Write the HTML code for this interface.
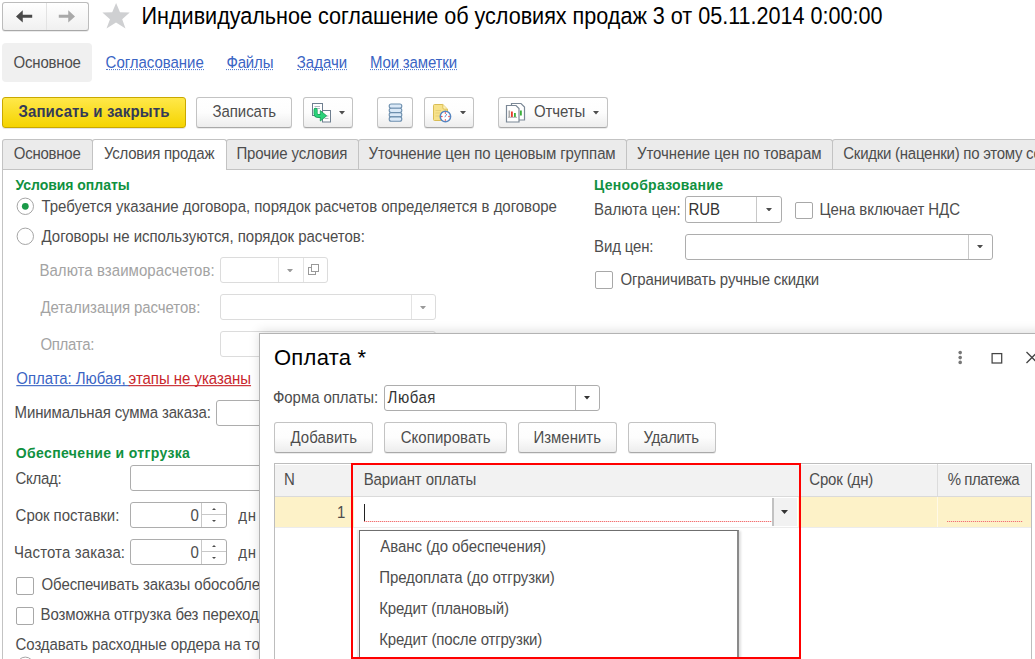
<!DOCTYPE html>
<html><head><meta charset="utf-8"><style>
html,body{margin:0;padding:0;}
body{width:1035px;height:659px;overflow:hidden;position:relative;background:#fff;font-family:"Liberation Sans", sans-serif;}
.t{position:absolute;white-space:nowrap;line-height:1;}
.b{position:absolute;}
</style></head><body>
<div class="b" style="left:2px;top:2px;width:87px;height:29px;box-sizing:border-box;border:1px solid #bcbcbc;border-bottom-color:#a8a8a8;border-radius:3px;background:linear-gradient(#ffffff,#f0f0f0);box-shadow:0 1px 0 rgba(0,0,0,0.08);"></div>
<div class="b" style="left:45.5px;top:3px;width:1.5px;height:27px;background:#e3e3e3;"></div>
<svg class="b" style="left:14px;top:8px" width="22" height="18" viewBox="0 0 22 18"><path d="M2 8.4 L8.75 2.2 L8.75 6.7 L18.2 6.7 L18.2 9.75 L8.75 9.75 L8.75 14.6 Z" fill="#4a4a4a"/></svg>
<svg class="b" style="left:57px;top:8px" width="22" height="18" viewBox="0 0 22 18"><path d="M18 8.4 L11.25 2.2 L11.25 6.7 L1.8 6.7 L1.8 9.75 L11.25 9.75 L11.25 14.6 Z" fill="#a9a9a9"/></svg>
<svg class="b" style="left:100px;top:0px" width="32" height="34" viewBox="0 0 32 34"><polygon points="16.1,3.1 20,12.2 29.7,12.4 22.2,19.2 25.5,28.6 16,22.4 6.5,28.6 10,19.2 2.4,12.4 12.2,12.2" fill="#cfd0d2"/></svg>
<div class="t" style="left:141.60px;top:6.0px;font-size:21.6px;color:#000;letter-spacing:-0.015px;transform:scaleY(1.1);transform-origin:0 18px;">Индивидуальное соглашение об условиях продаж 3 от 05.11.2014 0:00:00</div>
<div class="b" style="left:2px;top:43px;width:90px;height:39px;background:#f0f0f0;border-radius:4px;"></div>
<div class="t" style="left:13.50px;top:55.0px;font-size:15px;color:#4d4d4d;letter-spacing:-0.186px;transform:scaleY(1.1);transform-origin:0 13px;">Основное</div>
<div class="t" style="left:105.60px;top:56.0px;font-size:15px;color:#3a64c4;letter-spacing:-0.036px;transform:scaleY(1.1);transform-origin:0 13px;border-bottom:1px dotted #5a7fd0;line-height:13px;">Согласование</div>
<div class="t" style="left:226.40px;top:56.0px;font-size:15px;color:#3a64c4;letter-spacing:-0.15px;transform:scaleY(1.1);transform-origin:0 13px;border-bottom:1px dotted #5a7fd0;line-height:13px;">Файлы</div>
<div class="t" style="left:296.80px;top:56.0px;font-size:15px;color:#3a64c4;letter-spacing:-0.02px;transform:scaleY(1.1);transform-origin:0 13px;border-bottom:1px dotted #5a7fd0;line-height:13px;">Задачи</div>
<div class="t" style="left:370.00px;top:56.0px;font-size:15px;color:#3a64c4;letter-spacing:-0.17px;transform:scaleY(1.1);transform-origin:0 13px;border-bottom:1px dotted #5a7fd0;line-height:13px;">Мои заметки</div>
<div class="b" style="left:2px;top:97px;width:184px;height:31px;box-sizing:border-box;border:1px solid #c9a800;border-radius:3px;background:linear-gradient(#ffe84a,#f5d400);box-shadow:0 1px 0 rgba(0,0,0,0.10);"></div>
<div class="t" style="left:18.40px;top:104.0px;font-size:15px;color:#333a58;font-weight:700;letter-spacing:0.141px;transform:scaleY(1.1);transform-origin:0 13px;">Записать и закрыть</div>
<div class="b" style="left:196px;top:97px;width:96px;height:31px;box-sizing:border-box;border:1px solid #c3c3c3;border-bottom-color:#a9a9a9;border-radius:3px;background:linear-gradient(#ffffff 0%,#fdfdfd 50%,#ededed 100%);box-shadow:0 1px 0 rgba(0,0,0,0.08);"></div>
<div class="t" style="left:212.60px;top:104.0px;font-size:15px;color:#4d4d4d;letter-spacing:-0.086px;transform:scaleY(1.1);transform-origin:0 13px;">Записать</div>
<div class="b" style="left:303px;top:97px;width:50px;height:31px;box-sizing:border-box;border:1px solid #c3c3c3;border-bottom-color:#a9a9a9;border-radius:3px;background:linear-gradient(#ffffff 0%,#fdfdfd 50%,#ededed 100%);box-shadow:0 1px 0 rgba(0,0,0,0.08);"></div>
<svg class="b" style="left:310px;top:101px" width="24" height="24" viewBox="0 0 24 24">
<rect x="2.5" y="2.5" width="10" height="12" fill="#fff" stroke="#6f7f90" stroke-width="1"/>
<line x1="4.5" y1="5.5" x2="10" y2="5.5" stroke="#9aa6b2" stroke-width="0.8"/>
<line x1="7" y1="7.5" x2="10" y2="7.5" stroke="#9aa6b2" stroke-width="0.8"/>
<rect x="12.5" y="9.5" width="8" height="11.5" fill="#fff" stroke="#6f7f90" stroke-width="1"/>
<line x1="14.5" y1="15" x2="18.5" y2="15" stroke="#9aa6b2" stroke-width="0.8"/>
<line x1="14.5" y1="17.5" x2="18.5" y2="17.5" stroke="#9aa6b2" stroke-width="0.8"/>
<path d="M5.6 8.8 L5.6 12.5 Q5.6 15 9 15 L11 15" fill="none" stroke="#159a55" stroke-width="4" stroke-linecap="round"/>
<path d="M10.3 9.6 L16.6 14.8 L10.3 20 Z" fill="#2bd37a" stroke="#159a55" stroke-width="0.8" stroke-linejoin="round"/>
<path d="M5.6 8.8 L5.6 12.5 Q5.6 15 9 15 L11.5 15" fill="none" stroke="#2bd37a" stroke-width="2.6" stroke-linecap="round"/>
</svg>
<svg class="b" style="left:339.2px;top:111.25px" width="6" height="3.5" viewBox="0 0 6 3.5"><path d="M0 0 L6 0 L3.0 3.5 Z" fill="#4d4d4d"/></svg>
<div class="b" style="left:377px;top:97px;width:36px;height:31px;box-sizing:border-box;border:1px solid #c3c3c3;border-bottom-color:#a9a9a9;border-radius:3px;background:linear-gradient(#ffffff 0%,#fdfdfd 50%,#ededed 100%);box-shadow:0 1px 0 rgba(0,0,0,0.08);"></div>
<svg class="b" style="left:388px;top:103px" width="16" height="20" viewBox="0 0 16 20">
<rect x="1.2" y="1" width="12.6" height="4.3" rx="2" fill="#dbe9f7" stroke="#6d8fae" stroke-width="1.1"/>
<rect x="1.2" y="5.3" width="12.6" height="4.3" rx="2" fill="#dbe9f7" stroke="#6d8fae" stroke-width="1.1"/>
<rect x="1.2" y="9.6" width="12.6" height="4.3" rx="2" fill="#dbe9f7" stroke="#6d8fae" stroke-width="1.1"/>
<rect x="1.2" y="13.9" width="12.6" height="4.3" rx="2" fill="#dbe9f7" stroke="#6d8fae" stroke-width="1.1"/>
</svg>
<div class="b" style="left:424px;top:97px;width:50px;height:31px;box-sizing:border-box;border:1px solid #c3c3c3;border-bottom-color:#a9a9a9;border-radius:3px;background:linear-gradient(#ffffff 0%,#fdfdfd 50%,#ededed 100%);box-shadow:0 1px 0 rgba(0,0,0,0.08);"></div>
<svg class="b" style="left:431px;top:102px" width="24" height="24" viewBox="0 0 24 24">
<path d="M2.5 3.5 Q2.5 2.5 3.5 2.5 L11.8 2.5 L16.5 7.2 L16.5 17.5 Q16.5 18.5 15.5 18.5 L3.5 18.5 Q2.5 18.5 2.5 17.5 Z" fill="#f7e28a" stroke="#d9bd55" stroke-width="1"/>
<path d="M11.8 2.5 L11.8 5.8 Q11.8 7.2 13.2 7.2 L16.5 7.2" fill="#fdf0b8" stroke="#d9bd55" stroke-width="0.9"/>
<line x1="4.5" y1="8.5" x2="10" y2="8.5" stroke="#e0c870" stroke-width="0.7"/>
<line x1="4.5" y1="11" x2="9" y2="11" stroke="#e0c870" stroke-width="0.7"/>
<line x1="4.5" y1="14" x2="8" y2="14" stroke="#e0c870" stroke-width="0.7"/>
<circle cx="14.4" cy="14.5" r="5.2" fill="#fff" stroke="#5585c0" stroke-width="1.5"/>
<circle cx="14.4" cy="10.9" r="0.75" fill="#e8323a"/><circle cx="14.4" cy="18.1" r="0.75" fill="#e8323a"/>
<circle cx="10.8" cy="14.5" r="0.75" fill="#e8323a"/><circle cx="18" cy="14.5" r="0.75" fill="#e8323a"/>
<path d="M13.8 15.2 L15.8 12" stroke="#6a96d0" stroke-width="1"/>
</svg>
<svg class="b" style="left:459.6px;top:110.95px" width="6" height="3.5" viewBox="0 0 6 3.5"><path d="M0 0 L6 0 L3.0 3.5 Z" fill="#4d4d4d"/></svg>
<div class="b" style="left:498px;top:97px;width:110px;height:31px;box-sizing:border-box;border:1px solid #c3c3c3;border-bottom-color:#a9a9a9;border-radius:3px;background:linear-gradient(#ffffff 0%,#fdfdfd 50%,#ededed 100%);box-shadow:0 1px 0 rgba(0,0,0,0.08);"></div>
<svg class="b" style="left:504px;top:101px" width="24" height="24" viewBox="0 0 24 24">
<path d="M7.5 2.5 L17 2.5 L20.5 6 L20.5 19 L7.5 19 Z" fill="#fff" stroke="#7b8896" stroke-width="1.2"/>
<path d="M2.5 4.5 L12 4.5 L15 7.5 L15 21 L2.5 21 Z" fill="#fff" stroke="#7b8896" stroke-width="1.2"/>
<rect x="4.5" y="9.5" width="1.6" height="6.5" fill="#aaa"/>
<rect x="7" y="10.5" width="1.8" height="5.5" fill="#e8392c"/>
<rect x="10" y="12" width="1.8" height="4" fill="#3bb03b"/>
<rect x="16" y="9.5" width="1.8" height="5" fill="#3bb03b"/>
<line x1="4" y1="16.3" x2="13" y2="16.3" stroke="#999" stroke-width="0.8"/>
</svg>
<div class="t" style="left:534.00px;top:104.0px;font-size:15px;color:#4d4d4d;letter-spacing:-0.1px;transform:scaleY(1.1);transform-origin:0 13px;">Отчеты</div>
<svg class="b" style="left:593.0px;top:111.25px" width="6" height="3.5" viewBox="0 0 6 3.5"><path d="M0 0 L6 0 L3.0 3.5 Z" fill="#4d4d4d"/></svg>
<div class="b" style="left:2px;top:169px;width:1033px;height:1px;background:#c3c3c3;"></div>
<div class="b" style="left:2px;top:139px;width:91px;height:30px;box-sizing:border-box;border:1px solid #c3c3c3;border-bottom:none;border-radius:3px 3px 0 0;background:#ebebeb;"></div>
<div class="b" style="left:92px;top:139px;width:135px;height:31px;box-sizing:border-box;border:1px solid #c3c3c3;border-bottom:none;border-radius:3px 3px 0 0;background:#fff;"></div>
<div class="b" style="left:226px;top:139px;width:133px;height:30px;box-sizing:border-box;border:1px solid #c3c3c3;border-bottom:none;border-radius:3px 3px 0 0;background:#ebebeb;"></div>
<div class="b" style="left:358px;top:139px;width:269px;height:30px;box-sizing:border-box;border:1px solid #c3c3c3;border-bottom:none;border-radius:3px 3px 0 0;background:#ebebeb;"></div>
<div class="b" style="left:626px;top:139px;width:207px;height:30px;box-sizing:border-box;border:1px solid #c3c3c3;border-bottom:none;border-radius:3px 3px 0 0;background:#ebebeb;"></div>
<div class="b" style="left:832px;top:139px;width:208px;height:30px;box-sizing:border-box;border:1px solid #c3c3c3;border-bottom:none;border-radius:3px 3px 0 0;background:#ebebeb;"></div>
<div class="t" style="left:13.80px;top:146.0px;font-size:15px;color:#4d4d4d;letter-spacing:-0.257px;transform:scaleY(1.1);transform-origin:0 13px;">Основное</div>
<div class="t" style="left:103.90px;top:146.0px;font-size:15px;color:#4d4d4d;letter-spacing:-0.231px;transform:scaleY(1.1);transform-origin:0 13px;">Условия продаж</div>
<div class="t" style="left:236.40px;top:146.0px;font-size:15px;color:#4d4d4d;letter-spacing:-0.108px;transform:scaleY(1.1);transform-origin:0 13px;">Прочие условия</div>
<div class="t" style="left:368.50px;top:146.0px;font-size:15px;color:#4d4d4d;letter-spacing:-0.103px;transform:scaleY(1.1);transform-origin:0 13px;">Уточнение цен по ценовым группам</div>
<div class="t" style="left:637.00px;top:146.0px;font-size:15px;color:#4d4d4d;letter-spacing:-0.061px;transform:scaleY(1.1);transform-origin:0 13px;">Уточнение цен по товарам</div>
<div class="t" style="left:843.30px;top:146.0px;font-size:15px;color:#4d4d4d;letter-spacing:-0.26px;transform:scaleY(1.1);transform-origin:0 13px;">Скидки (наценки) по этому соглашению</div>
<div class="b" style="left:2px;top:169px;width:1px;height:490px;background:#c3c3c3;"></div>
<div class="t" style="left:15.50px;top:178.0px;font-size:14px;color:#10913f;font-weight:700;letter-spacing:-0.038px;">Условия оплаты</div>
<svg class="b" style="left:16px;top:197px" width="19" height="19" viewBox="0 0 19 19"><circle cx="9.3" cy="9.3" r="8.2" fill="#fff" stroke="#a6a6a6" stroke-width="1"/><circle cx="9.3" cy="9.3" r="3.4" fill="#1a9a48"/></svg>
<div class="t" style="left:41.50px;top:198.5px;font-size:15px;color:#4d4d4d;letter-spacing:-0.025px;transform:scaleY(1.1);transform-origin:0 13px;">Требуется указание договора, порядок расчетов определяется в договоре</div>
<svg class="b" style="left:16px;top:227px" width="19" height="19" viewBox="0 0 19 19"><circle cx="9.3" cy="9.3" r="8.2" fill="#fff" stroke="#a6a6a6" stroke-width="1"/></svg>
<div class="t" style="left:41.50px;top:228.6px;font-size:15px;color:#4d4d4d;letter-spacing:-0.019px;transform:scaleY(1.1);transform-origin:0 13px;">Договоры не используются, порядок расчетов:</div>
<div class="t" style="left:39.40px;top:263.3px;font-size:15px;color:#a3a3a3;letter-spacing:0.052px;transform:scaleY(1.1);transform-origin:0 13px;">Валюта взаиморасчетов:</div>
<div class="b" style="left:220px;top:257px;width:108px;height:26px;box-sizing:border-box;border:1px solid #dcdcdc;border-radius:3px;background:#fff;"></div>
<div class="b" style="left:278px;top:258px;width:1px;height:24px;background:#e3e3e3;"></div>
<div class="b" style="left:302.5px;top:258px;width:1.0px;height:24px;background:#e3e3e3;"></div>
<svg class="b" style="left:287.3px;top:268.75px" width="6" height="3.5" viewBox="0 0 6 3.5"><path d="M0 0 L6 0 L3.0 3.5 Z" fill="#9a9a9a"/></svg>
<svg class="b" style="left:307px;top:263px" width="14" height="14" viewBox="0 0 14 14"><rect x="1.5" y="4.5" width="7" height="7" fill="none" stroke="#999" stroke-width="1"/><rect x="4.5" y="1.5" width="7" height="7" fill="#fff" stroke="#999" stroke-width="1"/></svg>
<div class="t" style="left:40.40px;top:300.0px;font-size:15px;color:#a3a3a3;letter-spacing:-0.08px;transform:scaleY(1.1);transform-origin:0 13px;">Детализация расчетов:</div>
<div class="b" style="left:220px;top:294px;width:216px;height:26px;box-sizing:border-box;border:1px solid #dcdcdc;border-radius:3px;background:#fff;"></div>
<div class="b" style="left:410.5px;top:295px;width:1.0px;height:24px;background:#e3e3e3;"></div>
<svg class="b" style="left:419.6px;top:305.75px" width="6" height="3.5" viewBox="0 0 6 3.5"><path d="M0 0 L6 0 L3.0 3.5 Z" fill="#9a9a9a"/></svg>
<div class="t" style="left:40.40px;top:336.5px;font-size:15px;color:#a3a3a3;letter-spacing:-0.3px;transform:scaleY(1.1);transform-origin:0 13px;">Оплата:</div>
<div class="b" style="left:220px;top:331px;width:216px;height:26px;box-sizing:border-box;border:1px solid #dcdcdc;border-radius:3px;background:#fff;"></div>
<div class="t" style="left:16.30px;top:371.0px;font-size:15px;color:#3a64c4;letter-spacing:-0.05px;transform:scaleY(1.1);transform-origin:0 13px;text-decoration:underline;text-decoration-skip-ink:none;">Оплата: Любая,&nbsp;</div>
<div class="t" style="left:128.60px;top:371.0px;font-size:15px;color:#c8262c;letter-spacing:-0.04px;transform:scaleY(1.1);transform-origin:0 13px;text-decoration:underline;text-decoration-skip-ink:none;">этапы не указаны</div>
<div class="t" style="left:14.60px;top:405.0px;font-size:15px;color:#4d4d4d;letter-spacing:-0.129px;transform:scaleY(1.1);transform-origin:0 13px;">Минимальная сумма заказа:</div>
<div class="b" style="left:216px;top:400px;width:124px;height:26px;box-sizing:border-box;border:1px solid #adadad;border-radius:3px;background:#fff;"></div>
<div class="t" style="left:15.80px;top:446.4px;font-size:14px;color:#10913f;font-weight:700;letter-spacing:0.357px;">Обеспечение и отгрузка</div>
<div class="t" style="left:15.60px;top:471.0px;font-size:15px;color:#4d4d4d;letter-spacing:-0.32px;transform:scaleY(1.1);transform-origin:0 13px;">Склад:</div>
<div class="b" style="left:130px;top:465px;width:210px;height:26px;box-sizing:border-box;border:1px solid #adadad;border-radius:3px;background:#fff;"></div>
<div class="t" style="left:15.60px;top:508.0px;font-size:15px;color:#4d4d4d;letter-spacing:-0.046px;transform:scaleY(1.1);transform-origin:0 13px;">Срок поставки:</div>
<div class="b" style="left:130px;top:502px;width:97px;height:26px;box-sizing:border-box;border:1px solid #adadad;border-radius:3px;background:#fff;"></div>
<div class="b" style="left:201px;top:503px;width:1px;height:24px;background:#c8c8c8;"></div>
<div class="b" style="left:202px;top:514px;width:24px;height:1px;background:#c8c8c8;"></div>
<svg class="b" style="left:207px;top:505px" width="14" height="20" viewBox="0 0 14 20"><path d="M5 5 L9 5 L7 3 Z" fill="#4d4d4d"/><path d="M5 15 L9 15 L7 17 Z" fill="#4d4d4d"/></svg>
<div class="t" style="left:190.50px;top:508.0px;font-size:15px;color:#4d4d4d;transform:scaleY(1.1);transform-origin:0 13px;">0</div>
<div class="t" style="left:238.20px;top:508.0px;font-size:15px;color:#4d4d4d;letter-spacing:0.8px;transform:scaleY(1.1);transform-origin:0 13px;">дн</div>
<div class="t" style="left:14.00px;top:544.5px;font-size:15px;color:#4d4d4d;letter-spacing:0.114px;transform:scaleY(1.1);transform-origin:0 13px;">Частота заказа:</div>
<div class="b" style="left:130px;top:539px;width:97px;height:26px;box-sizing:border-box;border:1px solid #adadad;border-radius:3px;background:#fff;"></div>
<div class="b" style="left:201px;top:540px;width:1px;height:24px;background:#c8c8c8;"></div>
<div class="b" style="left:202px;top:551px;width:24px;height:1px;background:#c8c8c8;"></div>
<svg class="b" style="left:207px;top:542px" width="14" height="20" viewBox="0 0 14 20"><path d="M5 5 L9 5 L7 3 Z" fill="#4d4d4d"/><path d="M5 15 L9 15 L7 17 Z" fill="#4d4d4d"/></svg>
<div class="t" style="left:190.50px;top:544.5px;font-size:15px;color:#4d4d4d;transform:scaleY(1.1);transform-origin:0 13px;">0</div>
<div class="t" style="left:238.20px;top:544.5px;font-size:15px;color:#4d4d4d;letter-spacing:0.8px;transform:scaleY(1.1);transform-origin:0 13px;">дн</div>
<div class="b" style="left:16px;top:577px;width:18px;height:18px;box-sizing:border-box;border:1px solid #a8a8a8;border-radius:2px;background:#fff;"></div>
<div class="t" style="left:41.50px;top:577.0px;font-size:15px;color:#4d4d4d;letter-spacing:-0.1px;transform:scaleY(1.1);transform-origin:0 13px;">Обеспечивать заказы обособленно</div>
<div class="b" style="left:16px;top:607px;width:18px;height:18px;box-sizing:border-box;border:1px solid #a8a8a8;border-radius:2px;background:#fff;"></div>
<div class="t" style="left:40.50px;top:607.3px;font-size:15px;color:#4d4d4d;letter-spacing:-0.1px;transform:scaleY(1.1);transform-origin:0 13px;">Возможна отгрузка без переходов</div>
<div class="t" style="left:15.60px;top:637.4px;font-size:15px;color:#4d4d4d;letter-spacing:-0.1px;transform:scaleY(1.1);transform-origin:0 13px;">Создавать расходные ордера на товары</div>
<svg class="b" style="left:16px;top:656px" width="19" height="19" viewBox="0 0 19 19"><circle cx="9.3" cy="9.3" r="8.2" fill="#fff" stroke="#a6a6a6" stroke-width="1"/></svg>
<div class="t" style="left:594.10px;top:178.0px;font-size:14px;color:#10913f;font-weight:700;letter-spacing:0.271px;">Ценообразование</div>
<div class="t" style="left:594.10px;top:201.6px;font-size:15px;color:#4d4d4d;letter-spacing:0.02px;transform:scaleY(1.1);transform-origin:0 13px;">Валюта цен:</div>
<div class="b" style="left:685px;top:196px;width:97px;height:26.5px;box-sizing:border-box;border:1px solid #adadad;border-radius:3px;background:#fff;"></div>
<div class="b" style="left:756px;top:197px;width:1px;height:24.5px;background:#c8c8c8;"></div>
<svg class="b" style="left:765.6px;top:207.75px" width="6" height="3.5" viewBox="0 0 6 3.5"><path d="M0 0 L6 0 L3.0 3.5 Z" fill="#4d4d4d"/></svg>
<div class="t" style="left:688.50px;top:201.6px;font-size:15px;color:#333;letter-spacing:-0.1px;transform:scaleY(1.1);transform-origin:0 13px;">RUB</div>
<div class="b" style="left:795px;top:201.5px;width:18px;height:17.5px;box-sizing:border-box;border:1px solid #a8a8a8;border-radius:2px;background:#fff;"></div>
<div class="t" style="left:819.40px;top:202.0px;font-size:15px;color:#4d4d4d;letter-spacing:-0.05px;transform:scaleY(1.1);transform-origin:0 13px;">Цена включает НДС</div>
<div class="t" style="left:594.10px;top:239.0px;font-size:15px;color:#4d4d4d;letter-spacing:-0.157px;transform:scaleY(1.1);transform-origin:0 13px;">Вид цен:</div>
<div class="b" style="left:685px;top:233.5px;width:308px;height:26.0px;box-sizing:border-box;border:1px solid #adadad;border-radius:3px;background:#fff;"></div>
<div class="b" style="left:968px;top:234.5px;width:1px;height:24.0px;background:#c8c8c8;"></div>
<svg class="b" style="left:976.8px;top:244.75px" width="6" height="3.5" viewBox="0 0 6 3.5"><path d="M0 0 L6 0 L3.0 3.5 Z" fill="#4d4d4d"/></svg>
<div class="b" style="left:595px;top:271px;width:18px;height:18px;box-sizing:border-box;border:1px solid #a8a8a8;border-radius:2px;background:#fff;"></div>
<div class="t" style="left:620.50px;top:271.6px;font-size:15px;color:#4d4d4d;letter-spacing:-0.152px;transform:scaleY(1.1);transform-origin:0 13px;">Ограничивать ручные скидки</div>
<div class="b" style="left:259px;top:333px;width:786px;height:337px;box-sizing:border-box;border:1px solid #b3b3b3;background:#fff;box-shadow:0 -2px 10px rgba(0,0,0,0.13);"></div>
<div class="t" style="left:274.00px;top:346.5px;font-size:22px;color:#000;letter-spacing:0.257px;">Оплата *</div>
<svg class="b" style="left:955px;top:347px" width="12" height="20" viewBox="0 0 12 20"><circle cx="5.2" cy="5.6" r="1.8" fill="#777"/><circle cx="5.2" cy="10.6" r="1.8" fill="#777"/><circle cx="5.2" cy="15.4" r="1.8" fill="#777"/></svg>
<svg class="b" style="left:988px;top:349px" width="18" height="18" viewBox="0 0 18 18"><rect x="4.1" y="4.6" width="9.6" height="9.4" fill="none" stroke="#444" stroke-width="1.25"/></svg>
<svg class="b" style="left:1022px;top:349px" width="18" height="18" viewBox="0 0 18 18"><path d="M4.5 3 L15.5 14 M4.5 14 L15.5 3" stroke="#444" stroke-width="1.3"/></svg>
<div class="t" style="left:273.00px;top:390.0px;font-size:15px;color:#4d4d4d;letter-spacing:-0.067px;transform:scaleY(1.1);transform-origin:0 13px;">Форма оплаты:</div>
<div class="b" style="left:384px;top:384.5px;width:216px;height:26.0px;box-sizing:border-box;border:1px solid #adadad;border-radius:3px;background:#fff;"></div>
<div class="b" style="left:574.5px;top:385.5px;width:1.0px;height:24.0px;background:#b9b9b9;"></div>
<svg class="b" style="left:583.6px;top:396.05px" width="6" height="3.5" viewBox="0 0 6 3.5"><path d="M0 0 L6 0 L3.0 3.5 Z" fill="#333"/></svg>
<div class="t" style="left:387.60px;top:390.0px;font-size:15px;color:#333;letter-spacing:0.5px;transform:scaleY(1.1);transform-origin:0 13px;">Любая</div>
<div class="b" style="left:274px;top:421.5px;width:99px;height:31.5px;box-sizing:border-box;border:1px solid #c3c3c3;border-bottom-color:#a9a9a9;border-radius:3px;background:linear-gradient(#ffffff 0%,#fdfdfd 50%,#ededed 100%);box-shadow:0 1px 0 rgba(0,0,0,0.08);"></div>
<div class="t" style="left:290.40px;top:429.5px;font-size:15px;color:#4d4d4d;letter-spacing:0.057px;transform:scaleY(1.1);transform-origin:0 13px;">Добавить</div>
<div class="b" style="left:384px;top:421.5px;width:123px;height:31.5px;box-sizing:border-box;border:1px solid #c3c3c3;border-bottom-color:#a9a9a9;border-radius:3px;background:linear-gradient(#ffffff 0%,#fdfdfd 50%,#ededed 100%);box-shadow:0 1px 0 rgba(0,0,0,0.08);"></div>
<div class="t" style="left:400.70px;top:429.5px;font-size:15px;color:#4d4d4d;letter-spacing:0.04px;transform:scaleY(1.1);transform-origin:0 13px;">Скопировать</div>
<div class="b" style="left:517.5px;top:421.5px;width:99.5px;height:31.5px;box-sizing:border-box;border:1px solid #c3c3c3;border-bottom-color:#a9a9a9;border-radius:3px;background:linear-gradient(#ffffff 0%,#fdfdfd 50%,#ededed 100%);box-shadow:0 1px 0 rgba(0,0,0,0.08);"></div>
<div class="t" style="left:533.40px;top:429.5px;font-size:15px;color:#4d4d4d;letter-spacing:-0.014px;transform:scaleY(1.1);transform-origin:0 13px;">Изменить</div>
<div class="b" style="left:627.5px;top:421.5px;width:88.5px;height:31.5px;box-sizing:border-box;border:1px solid #c3c3c3;border-bottom-color:#a9a9a9;border-radius:3px;background:linear-gradient(#ffffff 0%,#fdfdfd 50%,#ededed 100%);box-shadow:0 1px 0 rgba(0,0,0,0.08);"></div>
<div class="t" style="left:643.50px;top:429.5px;font-size:15px;color:#4d4d4d;letter-spacing:-0.3px;transform:scaleY(1.1);transform-origin:0 13px;">Удалить</div>
<div class="b" style="left:274px;top:463px;width:758px;height:237px;box-sizing:border-box;border:1px solid #bdbdbd;background:#fff;"></div>
<div class="b" style="left:275px;top:464px;width:756px;height:32px;background:#f2f2f2;border-top:1px solid #fff;box-sizing:border-box;"></div>
<div class="b" style="left:275px;top:496px;width:756px;height:1px;background:#dadada;"></div>
<div class="b" style="left:275px;top:497px;width:756px;height:30px;background:#fdf2c8;"></div>
<div class="b" style="left:275px;top:527px;width:756px;height:1px;background:#ececec;"></div>
<div class="b" style="left:936.5px;top:464px;width:1.0px;height:32px;background:#dcdcdc;"></div>
<div class="b" style="left:936.5px;top:497px;width:1.0px;height:30px;background:#fff9e6;"></div>
<div class="b" style="left:800px;top:464px;width:1px;height:32px;background:#dcdcdc;"></div>
<div class="t" style="left:284.00px;top:471.5px;font-size:15px;color:#4d4d4d;transform:scaleY(1.1);transform-origin:0 13px;">N</div>
<div class="t" style="left:363.70px;top:471.5px;font-size:15px;color:#4d4d4d;letter-spacing:-0.085px;transform:scaleY(1.1);transform-origin:0 13px;">Вариант оплаты</div>
<div class="t" style="left:809.20px;top:471.5px;font-size:15px;color:#4d4d4d;letter-spacing:-0.138px;transform:scaleY(1.1);transform-origin:0 13px;">Срок (дн)</div>
<div class="t" style="left:947.70px;top:471.5px;font-size:15px;color:#4d4d4d;letter-spacing:-0.463px;transform:scaleY(1.1);transform-origin:0 13px;">% платежа</div>
<div class="t" style="left:337.00px;top:504.5px;font-size:15px;color:#4d4d4d;transform:scaleY(1.1);transform-origin:0 13px;">1</div>
<div class="b" style="left:354px;top:497px;width:444px;height:30px;background:#fff;"></div>
<div class="b" style="left:772px;top:498px;width:2px;height:28px;background:#c2c2c2;"></div>
<div class="b" style="left:774px;top:498px;width:23px;height:28px;background:#f2f2f2;"></div>
<svg class="b" style="left:781.2px;top:509.5px" width="7" height="4" viewBox="0 0 7 4"><path d="M0 0 L7 0 L3.5 4 Z" fill="#333"/></svg>
<div class="b" style="left:364px;top:503.5px;width:1px;height:17.0px;background:#222;"></div>
<div class="b" style="left:363.5px;top:520.5px;width:408.5px;height:1.5px;background:repeating-linear-gradient(90deg,#f37272 0 1px,#fad4d4 1px 2px);"></div>
<div class="b" style="left:946.5px;top:520.5px;width:76.0px;height:1.5px;background:repeating-linear-gradient(90deg,#f37272 0 1px,#f9d6c0 1px 2px);"></div>
<div class="b" style="left:359px;top:530px;width:380px;height:130px;box-sizing:border-box;border:1px solid #6f6f6f;border-right:2px solid #8a8a8a;border-bottom:1px solid #6f6f6f;background:#fff;box-shadow:-2px 0 1px rgba(0,0,0,0.07),2px 1px 2px rgba(0,0,0,0.12);"></div>
<div class="t" style="left:380.20px;top:538.6px;font-size:15px;color:#4d4d4d;letter-spacing:-0.048px;transform:scaleY(1.1);transform-origin:0 13px;">Аванс (до обеспечения)</div>
<div class="t" style="left:379.20px;top:570.0px;font-size:15px;color:#4d4d4d;letter-spacing:-0.083px;transform:scaleY(1.1);transform-origin:0 13px;">Предоплата (до отгрузки)</div>
<div class="t" style="left:379.20px;top:601.0px;font-size:15px;color:#4d4d4d;letter-spacing:-0.156px;transform:scaleY(1.1);transform-origin:0 13px;">Кредит (плановый)</div>
<div class="t" style="left:379.20px;top:632.0px;font-size:15px;color:#4d4d4d;letter-spacing:-0.145px;transform:scaleY(1.1);transform-origin:0 13px;">Кредит (после отгрузки)</div>
<div class="b" style="left:351px;top:463px;width:450px;height:196px;box-sizing:border-box;border:2px solid #ff0000;"></div>
</body></html>
